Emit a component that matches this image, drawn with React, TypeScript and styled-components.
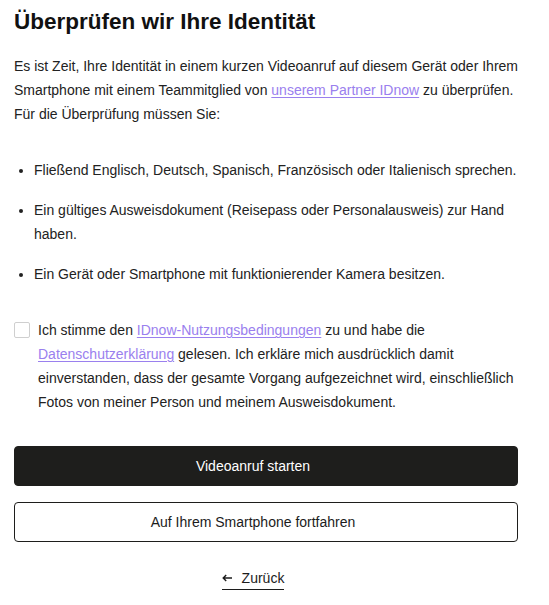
import React from "react";
import styled, { createGlobalStyle } from "styled-components";

const Global = createGlobalStyle`
  html, body { margin: 0; padding: 0; background: #fff; }
  body { font-family: "Liberation Sans", Arial, sans-serif; color: #1c1c1c; }
  * { box-sizing: border-box; }
`;

const Page = styled.main`
  width: 532px;
  padding: 6px 14px 0 14px;
  display: flex;
  flex-direction: column;
`;

const Title = styled.h1`
  margin: 0;
  font-size: 22.5px;
  line-height: 32px;
  font-weight: 700;
  color: #111;
`;

const Text = styled.p`
  margin: 16px 0 0 0;
  font-size: 14px;
  line-height: 24px;
  color: #222;
`;

const Link = styled.a`
  color: #9a80ee;
  text-decoration: underline;
  text-underline-offset: 2px;
  text-decoration-thickness: 1px;
`;

const List = styled.ul`
  margin: 32px 0 0 0;
  padding: 0 0 0 20px;
  display: flex;
  flex-direction: column;
  gap: 16px;
`;

const Item = styled.li`
  font-size: 14px;
  line-height: 24px;
  color: #222;
`;

const Consent = styled.label`
  margin-top: 32px;
  display: flex;
  gap: 8px;
  align-items: flex-start;
`;

const Box = styled.span`
  flex: none;
  width: 16px;
  height: 16px;
  margin-top: 4px;
  border: 1px solid #cfcfcf;
  border-radius: 2px;
  background: #fff;
`;

const ConsentText = styled.span`
  font-size: 14px;
  line-height: 24px;
  color: #222;
`;

const Buttons = styled.div`
  margin-top: 32px;
  display: flex;
  flex-direction: column;
  gap: 16px;
`;

const Button = styled.button<{ $primary?: boolean }>`
  height: 40px;
  width: 100%;
  padding: 0 26px 0 0;
  border-radius: 4px;
  font-family: inherit;
  font-size: 14px;
  border: 1px solid #1e1e1c;
  background: ${(p) => (p.$primary ? "#1e1e1c" : "#fff")};
  color: ${(p) => (p.$primary ? "#fff" : "#1c1c1c")};
  cursor: pointer;
`;

const BackRow = styled.div`
  margin-top: 26px;
  padding-right: 26px;
  display: flex;
  justify-content: center;
`;

const Back = styled.a`
  display: inline-flex;
  align-items: center;
  gap: 10px;
  font-size: 14px;
  line-height: 20px;
  color: #1c1c1c;
  padding-bottom: 1px;
  border-bottom: 1px solid #1c1c1c;
  text-decoration: none;
`;

const Arrow = () => (
  <svg width="10" height="8" viewBox="0 0 10 8" fill="none" stroke="#1c1c1c" strokeWidth="1.4">
    <path d="M10 4H1.2M4.2 1L1.2 4l3 3" />
  </svg>
);

export default function App() {
  return (
    <>
      <Global />
      <Page>
        <Title>Überprüfen wir Ihre Identität</Title>
        <Text>
          Es ist Zeit, Ihre Identität in einem kurzen Videoanruf auf diesem Gerät oder Ihrem
          Smartphone mit einem Teammitglied von <Link href="#">unserem Partner IDnow</Link> zu
          überprüfen. Für die Überprüfung müssen Sie:
        </Text>
        <List>
          <Item>Fließend Englisch, Deutsch, Spanisch, Französisch oder Italienisch sprechen.</Item>
          <Item>Ein gültiges Ausweisdokument (Reisepass oder Personalausweis) zur Hand haben.</Item>
          <Item>Ein Gerät oder Smartphone mit funktionierender Kamera besitzen.</Item>
        </List>
        <Consent>
          <Box />
          <ConsentText>
            Ich stimme den <Link href="#">IDnow-Nutzungsbedingungen</Link> zu und habe die{" "}
            <Link href="#">Datenschutzerklärung</Link> gelesen. Ich erkläre mich ausdrücklich damit
            einverstanden, dass der gesamte Vorgang aufgezeichnet wird, einschließlich Fotos von
            meiner Person und meinem Ausweisdokument.
          </ConsentText>
        </Consent>
        <Buttons>
          <Button $primary>Videoanruf starten</Button>
          <Button>Auf Ihrem Smartphone fortfahren</Button>
        </Buttons>
        <BackRow>
          <Back href="#">
            <Arrow />
            <span>Zurück</span>
          </Back>
        </BackRow>
      </Page>
    </>
  );
}
